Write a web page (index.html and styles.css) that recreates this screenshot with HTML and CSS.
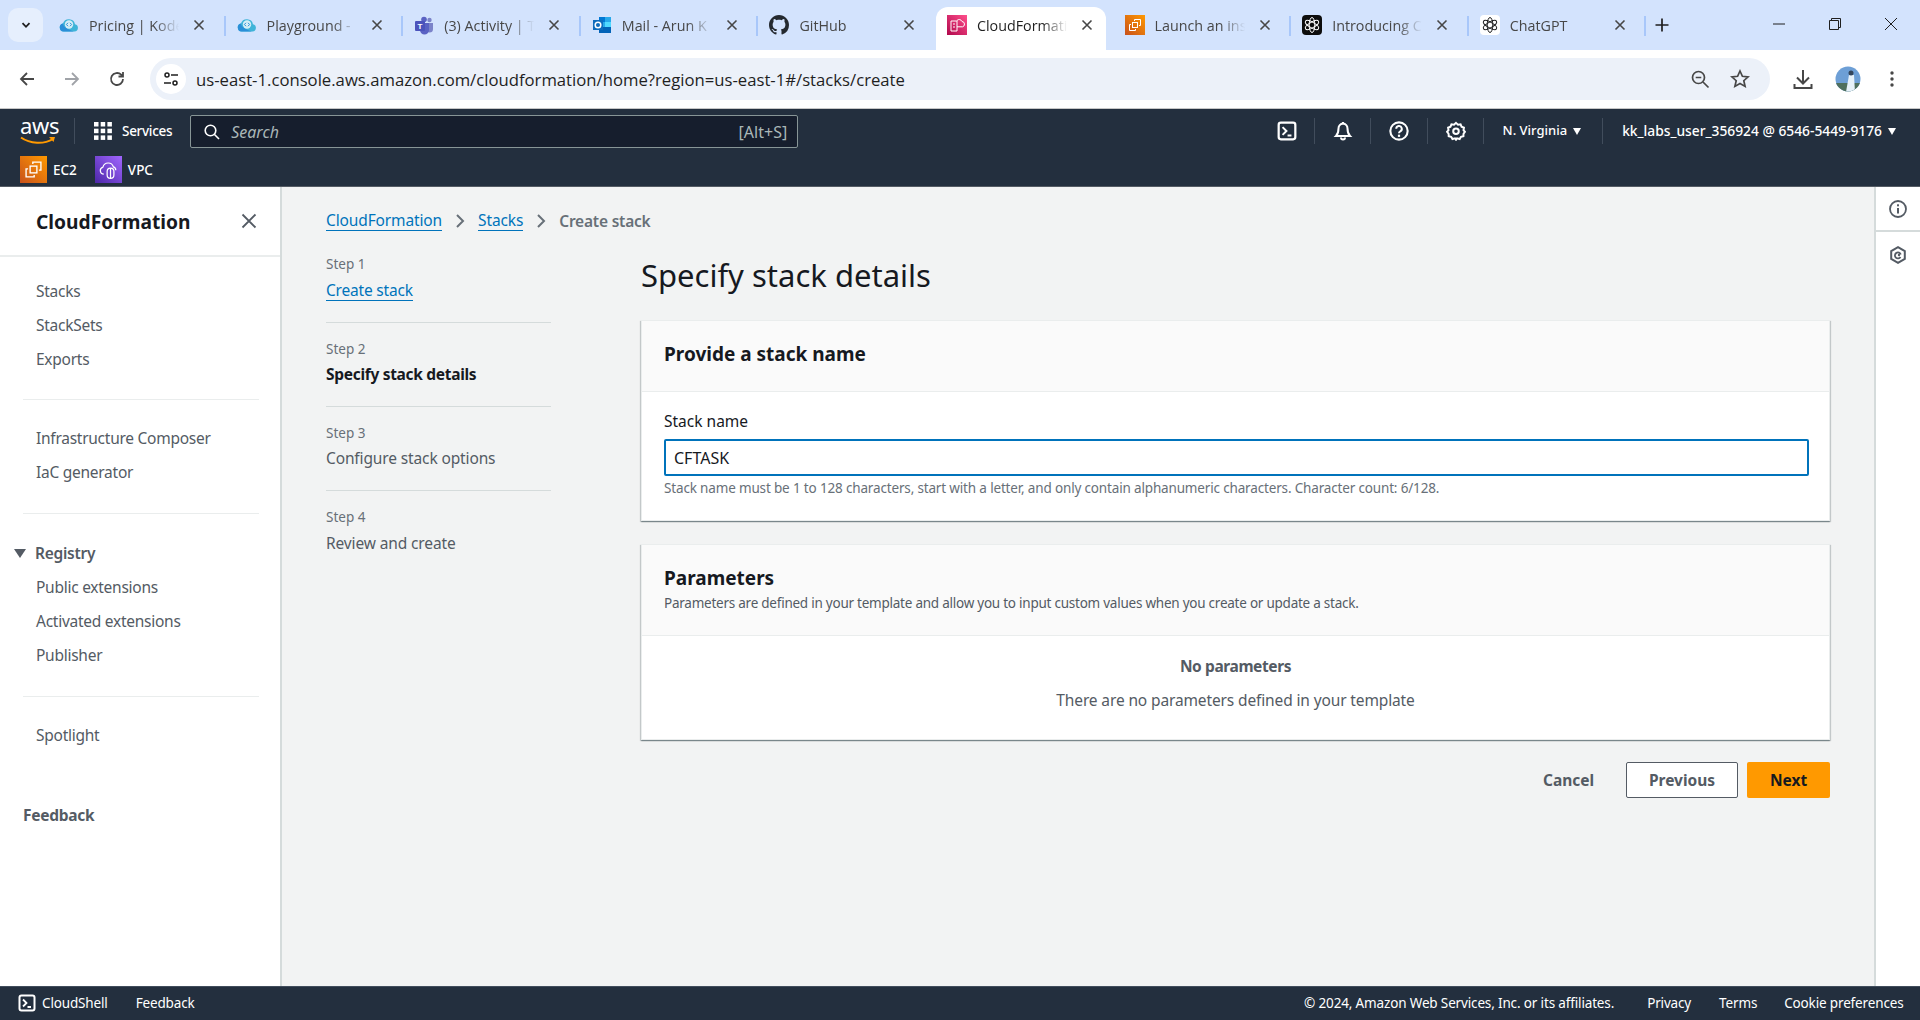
FILE: index.html
```html
<!DOCTYPE html>
<html lang="en">
<head>
<meta charset="utf-8">
<title>CloudFormation</title>
<link rel="stylesheet" href="styles.css">
</head>
<body>
<svg class="sprite" width="0" height="0" aria-hidden="true">
  <defs>
    <symbol id="x" viewBox="0 0 12 12"><path d="M1.5 1.5l9 9M10.5 1.5l-9 9" fill="none" stroke="currentColor" stroke-width="1.6"/></symbol>
    <symbol id="cloud" viewBox="0 0 20 20"><path d="M4.5 16.5a4 4 0 0 1-.6-7.9 6.3 6.3 0 0 1 12.1.6 3.7 3.7 0 0 1-.4 7.3z" fill="#3fb4d8"/><path d="M4.5 16.5a4 4 0 0 1-.6-7.9c.8 4 5 6 11 7.9z" fill="#2a8fd8"/><circle cx="10" cy="9.5" r="4.2" fill="#d6eef6"/><path d="M9 7.8L7.4 9.5 9 11.2M11 7.8l1.6 1.7L11 11.2" fill="none" stroke="#2a8fd8" stroke-width="1"/></symbol>
    <symbol id="openai" viewBox="0 0 20 20"><g fill="none" stroke="currentColor" stroke-width="1"><ellipse cx="10" cy="10" rx="2.8" ry="7.5"/><ellipse cx="10" cy="10" rx="2.8" ry="7.5" transform="rotate(60 10 10)"/><ellipse cx="10" cy="10" rx="2.8" ry="7.5" transform="rotate(120 10 10)"/></g></symbol>
    <symbol id="ec2" viewBox="0 0 20 20"><g fill="none" stroke="#fff" stroke-width="1"><rect x="7.5" y="7.5" width="5" height="5"/><path d="M9.5 6V4.5h6v6H14M6 9.5H4.5v6h6V14"/></g></symbol>
    <symbol id="term" viewBox="0 0 18 18"><rect x="1.5" y="1.5" width="15" height="15" rx="2" fill="none" stroke="currentColor" stroke-width="2"/><path d="M5 5.5L8.5 9 5 12.5M9.5 13H13" fill="none" stroke="currentColor" stroke-width="1.8"/></symbol>
  </defs>
</svg>

<header class="tabstrip">
  <button class="tab-list" type="button" aria-label="Search tabs"><svg width="12" height="12" viewBox="0 0 12 12"><path d="M2.5 4.2L6 7.8l3.5-3.6" fill="none" stroke="#1f1f1f" stroke-width="1.8"/></svg></button>
  <div class="tab"><svg class="fav"><use href="#cloud"/></svg><span class="tab-title">Pricing | Kode</span><svg class="tab-x"><use href="#x"/></svg></div>
  <div class="tab"><svg class="fav"><use href="#cloud"/></svg><span class="tab-title">Playground -</span><svg class="tab-x"><use href="#x"/></svg></div>
  <div class="tab"><svg class="fav" viewBox="0 0 20 20"><circle cx="15.5" cy="5" r="2.2" fill="#7b83c9"/><path d="M12 8h7v6a3.500 3.500 0 0 1-7 0z" fill="#7b83c9"/><circle cx="10" cy="4.500" r="2.800" fill="#5a62c3"/><path d="M6 8h9v7a4.500 4.500 0 0 1-9 0z" fill="#5a62c3"/><rect x="1" y="6" width="10" height="10" rx="1" fill="#4b53bc"/><text class="fav-letter" x="6" y="14">T</text></svg><span class="tab-title">(3) Activity | T</span><svg class="tab-x"><use href="#x"/></svg></div>
  <div class="tab"><svg class="fav" viewBox="0 0 20 20"><rect x="7" y="2" width="12" height="16" fill="#28a8ea"/><rect x="7" y="2" width="6" height="5" fill="#0078d4"/><rect x="13" y="7" width="6" height="5" fill="#50d9ff"/><path d="M7 12h12v6H7z" fill="#0364b8"/><rect x="1" y="5" width="10" height="10" fill="#0f6cbd"/><circle cx="6" cy="10" r="2.800" fill="none" stroke="#fff" stroke-width="1.500"/></svg><span class="tab-title">Mail - Arun K</span><svg class="tab-x"><use href="#x"/></svg></div>
  <div class="tab"><svg class="fav" viewBox="0 0 16 16"><path fill="#24292f" d="M8 0C3.580 0 0 3.580 0 8c0 3.540 2.290 6.530 5.470 7.590.4.070.55-.17.55-.38 0-.19-.01-.82-.01-1.490-2.010.37-2.530-.49-2.690-.94-.09-.23-.48-.94-.82-1.130-.28-.15-.68-.52-.01-.53.63-.01 1.080.58 1.230.82.720 1.210 1.870.87 2.330.66.070-.52.280-.87.510-1.070-1.780-.2-3.640-.89-3.640-3.950 0-.87.310-1.590.820-2.150-.08-.2-.36-1.020.08-2.120 0 0 .67-.21 2.200.82.640-.18 1.320-.27 2-.27s1.360.09 2 .27c1.530-1.040 2.200-.82 2.200-.82.440 1.100.160 1.920.080 2.120.51.560.82 1.270.82 2.150 0 3.070-1.870 3.750-3.650 3.950.29.250.54.730.54 1.480 0 1.070-.01 1.930-.01 2.200 0 .21.150.46.550.38A8.010 8.010 0 0 0 16 8c0-4.420-3.580-8-8-8z"/></svg><span class="tab-title">GitHub</span><svg class="tab-x"><use href="#x"/></svg></div>
  <div class="tab tab-active"><svg class="fav" viewBox="0 0 20 20"><defs><linearGradient id="pink" x1="0" y1="1" x2="1" y2="0"><stop offset="0" stop-color="#b0084d"/><stop offset="1" stop-color="#ff4f8b"/></linearGradient></defs><rect width="20" height="20" fill="url(#pink)"/><g fill="none" stroke="#fff" stroke-width="1"><path d="M4 6h6v10H4zM6 9h2M6 12h2"/><path d="M10 5.500a3 3 0 0 1 5 1 2.700 2.700 0 0 1 .5 5.300H10"/></g></svg><span class="tab-title">CloudFormati</span><svg class="tab-x"><use href="#x"/></svg></div>
  <div class="tab"><svg class="fav" viewBox="0 0 20 20"><defs><linearGradient id="orange" x1="0" y1="1" x2="1" y2="0"><stop offset="0" stop-color="#c8511b"/><stop offset="1" stop-color="#ff9900"/></linearGradient></defs><rect width="20" height="20" fill="url(#orange)"/><use href="#ec2"/></svg><span class="tab-title">Launch an ins</span><svg class="tab-x"><use href="#x"/></svg></div>
  <div class="tab"><svg class="fav fav-dark" viewBox="0 0 20 20"><rect width="20" height="20" rx="4" fill="#0d0d0d"/><use href="#openai"/></svg><span class="tab-title">Introducing C</span><svg class="tab-x"><use href="#x"/></svg></div>
  <div class="tab"><svg class="fav fav-light" viewBox="0 0 20 20"><rect width="20" height="20" rx="4" fill="#fff"/><use href="#openai"/></svg><span class="tab-title">ChatGPT</span><svg class="tab-x"><use href="#x"/></svg></div>
  <svg class="new-tab" width="16" height="16" viewBox="0 0 16 16"><path d="M8 1.500v13M1.500 8h13" stroke="#1f1f1f" stroke-width="1.700"/></svg>
  <div class="window-controls">
    <svg width="14" height="14" viewBox="0 0 14 14"><path d="M1 7h12" stroke="#1f1f1f" stroke-width="1"/></svg>
    <svg width="14" height="14" viewBox="0 0 14 14"><path d="M1.500 3.500h9v9h-9zM3.500 3.500v-2h9v9h-2" fill="none" stroke="#1f1f1f" stroke-width="1"/></svg>
    <svg width="14" height="14" viewBox="0 0 14 14"><path d="M1 1l12 12M13 1L1 13" stroke="#1f1f1f" stroke-width="1"/></svg>
  </div>
</header>

<div class="toolbar">
  <svg class="tb-icon" viewBox="0 0 18 18"><path d="M16 9H3M9 3L3 9l6 6" fill="none" stroke="#474747" stroke-width="1.800"/></svg>
  <svg class="tb-icon" viewBox="0 0 18 18"><path d="M2 9h13M9 3l6 6-6 6" fill="none" stroke="#a0a3a8" stroke-width="1.800"/></svg>
  <svg class="tb-icon" viewBox="0 0 18 18"><path d="M15 9a6 6 0 1 1-1.800-4.300L15 6.500M15 2v4.500h-4.500" fill="none" stroke="#474747" stroke-width="1.800"/></svg>
  <div class="omnibox">
    <span class="site-settings"><svg width="18" height="18" viewBox="0 0 18 18"><g fill="none" stroke="#1f1f1f" stroke-width="1.500"><circle cx="5" cy="5" r="2"/><path d="M9 5h7M2 13h7"/><circle cx="13" cy="13" r="2"/></g></svg></span>
    <span class="url">us-east-1.console.aws.amazon.com/cloudformation/home?region=us-east-1#/stacks/create</span>
    <svg class="omni-icon omni-zoom" viewBox="0 0 20 20"><g fill="none" stroke="#474747" stroke-width="1.700"><circle cx="8.500" cy="8.500" r="6"/><path d="M13 13l5.500 5.500M5.700 8.500h5.600"/></g></svg>
    <svg class="omni-icon" viewBox="0 0 20 20"><path d="M10 2l2.400 5.300 5.700.6-4.300 3.800 1.300 5.700L10 14.500l-5.100 2.900 1.300-5.700L1.900 7.900l5.700-.6z" fill="none" stroke="#474747" stroke-width="1.700"/></svg>
  </div>
  <svg class="tb-icon tb-download" viewBox="0 0 22 22"><path d="M11 2v13M5 9.500l6 6 6-6M2.500 16v4h17v-4" fill="none" stroke="#474747" stroke-width="2"/></svg>
  <svg class="avatar" viewBox="0 0 26 26"><defs><clipPath id="round"><circle cx="13" cy="13" r="12.500"/></clipPath></defs><g clip-path="url(#round)"><rect width="26" height="26" fill="#6d9fd6"/><rect y="17" width="26" height="9" fill="#4e6f5e"/><path d="M14 9h5l1 17h-9z" fill="#e6f1fa"/><circle cx="16" cy="7" r="2.500" fill="#33465c"/></g></svg>
  <svg class="tb-icon tb-menu" viewBox="0 0 18 18"><g fill="#474747"><circle cx="9" cy="3" r="1.700"/><circle cx="9" cy="9" r="1.700"/><circle cx="9" cy="15" r="1.700"/></g></svg>
</div>

<nav class="awsnav">
  <div class="nav-row">
    <div class="aws-logo"><span class="aws-word">aws</span><svg class="aws-smile" width="36" height="9" viewBox="0 0 36 9"><path d="M1 1.500c9 6.500 23 7 32 1.500" fill="none" stroke="#f90" stroke-width="2"/><path d="M29 1h6l-1.500 5z" fill="#f90"/></svg></div>
    <span class="nav-sep nav-sep-logo"></span>
    <svg class="grid-icon" width="18" height="18" viewBox="0 0 18 18"><g fill="#fff"><rect width="4.500" height="4.500"/><rect x="6.700" width="4.500" height="4.500"/><rect x="13.400" width="4.500" height="4.500"/><rect y="6.700" width="4.500" height="4.500"/><rect x="6.700" y="6.700" width="4.500" height="4.500"/><rect x="13.400" y="6.700" width="4.500" height="4.500"/><rect y="13.400" width="4.500" height="4.500"/><rect x="6.700" y="13.400" width="4.500" height="4.500"/><rect x="13.400" y="13.400" width="4.500" height="4.500"/></g></svg>
    <span class="nav-services">Services</span>
    <div class="search">
      <svg width="16" height="16" viewBox="0 0 16 16"><g fill="none" stroke="#fff" stroke-width="1.600"><circle cx="6.500" cy="6.500" r="5.300"/><path d="M10.500 10.500L15 15"/></g></svg>
      <span class="search-ph">Search</span>
      <span class="search-key">[Alt+S]</span>
    </div>
    <div class="nav-right">
      <svg class="nav-icon nav-term"><use href="#term"/></svg>
      <span class="nav-sep"></span>
      <svg class="nav-icon nav-icon-tight" viewBox="0 0 18 20"><path d="M9 2.500a5 5 0 0 0-4.500 5c0 3.500-.5 5.500-2.500 7.500h14c-2-2-2.500-4-2.500-7.500A5 5 0 0 0 9 2.500zM7 16.500a2 2 0 0 0 4 0M9 1v1.500" fill="none" stroke="#fff" stroke-width="2"/></svg>
      <span class="nav-sep"></span>
      <svg class="nav-icon" viewBox="0 0 18 18"><circle cx="9" cy="9" r="7.800" fill="none" stroke="#fff" stroke-width="1.900"/><path d="M6.500 7a2.500 2.500 0 1 1 3.600 2.300c-.8.400-1.100.9-1.100 1.700" fill="none" stroke="#fff" stroke-width="1.800"/><rect x="8" y="12.300" width="2" height="2" fill="#fff"/></svg>
      <span class="nav-sep"></span>
      <svg class="nav-icon nav-icon-tight" viewBox="0 0 18 18"><path d="M9 1l2 1.800 2.600-.4 1 2.500 2.400 1-.4 2.600L18 10l-1.400 2-.1 2.500-2.500.6-1.300 2.200L10 16.600 9 18l-1-1.400-2.600.7-1.300-2.200-2.500-.6-.1-2.500L0 10l1.400-1.500L1 5.900l2.400-1 1-2.500L7 2.800z" transform="translate(1 .8) scale(.89)" fill="none" stroke="#fff" stroke-width="2"/><circle cx="9" cy="9.300" r="2.500" fill="none" stroke="#fff" stroke-width="1.800"/></svg>
      <span class="nav-sep"></span>
      <span class="nav-menu nav-region">N. Virginia<i class="caret"></i></span>
      <span class="nav-sep"></span>
      <span class="nav-menu nav-user">kk_labs_user_356924 @ 6546-5449-9176<i class="caret"></i></span>
    </div>
  </div>
  <div class="nav-row nav-row-fav">
    <span class="svc"><svg class="svc-icon" viewBox="0 0 20 20"><rect width="20" height="20" fill="url(#orange)"/><use href="#ec2"/></svg>EC2</span>
    <span class="svc"><svg class="svc-icon" viewBox="0 0 20 20"><defs><linearGradient id="purple" x1="0" y1="1" x2="1" y2="0"><stop offset="0" stop-color="#4d27a8"/><stop offset="1" stop-color="#a166ff"/></linearGradient></defs><rect width="20" height="20" fill="url(#purple)"/><g fill="none" stroke="#fff" stroke-width=".9"><path d="M6.500 13.500a2.700 2.700 0 0 1-.6-5.300 4 4 0 0 1 7.700-.2 2.500 2.500 0 0 1 1.800 2.500"/><rect x="9" y="9" width="5" height="7.500" rx="2.500"/><path d="M11.500 9v7.500"/></g></svg>VPC</span>
  </div>
</nav>

<div class="workspace">
  <aside class="sidebar">
    <div class="side-head"><span class="side-title">CloudFormation</span><svg class="side-close" viewBox="0 0 16 16"><path d="M1.500 1.500l13 13M14.500 1.500l-13 13" stroke="#545b64" stroke-width="1.800"/></svg></div>
    <ul class="side-group side-first"><li>Stacks</li><li>StackSets</li><li>Exports</li></ul>
    <hr class="side-rule">
    <ul class="side-group"><li>Infrastructure Composer</li><li>IaC generator</li></ul>
    <hr class="side-rule">
    <div class="side-section"><i class="side-caret"></i>Registry</div>
    <ul class="side-group side-nested"><li>Public extensions</li><li>Activated extensions</li><li>Publisher</li></ul>
    <hr class="side-rule">
    <ul class="side-group"><li>Spotlight</li></ul>
    <div class="side-feedback">Feedback</div>
  </aside>

  <main class="main">
    <div class="breadcrumb">
      <a class="link">CloudFormation</a>
      <svg class="crumb-sep" viewBox="0 0 10 16"><path d="M2 2l6 6-6 6" fill="none" stroke="#687078" stroke-width="2"/></svg>
      <a class="link">Stacks</a>
      <svg class="crumb-sep" viewBox="0 0 10 16"><path d="M2 2l6 6-6 6" fill="none" stroke="#687078" stroke-width="2"/></svg>
      <span class="crumb-current">Create stack</span>
    </div>
    <div class="wizard">
      <ol class="steps">
        <li class="step"><div class="step-label">Step 1</div><a class="link step-name">Create stack</a></li>
        <li class="step"><div class="step-label">Step 2</div><div class="step-name step-active">Specify stack details</div></li>
        <li class="step"><div class="step-label">Step 3</div><div class="step-name">Configure stack options</div></li>
        <li class="step"><div class="step-label">Step 4</div><div class="step-name">Review and create</div></li>
      </ol>
      <section class="form">
        <h1 class="page-title">Specify stack details</h1>
        <div class="card">
          <div class="card-head card-head-name"><h2 class="card-title">Provide a stack name</h2></div>
          <div class="card-body">
            <label class="field-label" for="stackname">Stack name</label>
            <input class="field-input" id="stackname" value="CFTASK">
            <p class="field-hint">Stack name must be 1 to 128 characters, start with a letter, and only contain alphanumeric characters. Character count: 6/128.</p>
          </div>
        </div>
        <div class="card card-params">
          <div class="card-head card-head-params"><h2 class="card-title">Parameters</h2><p class="card-desc">Parameters are defined in your template and allow you to input custom values when you create or update a stack.</p></div>
          <div class="card-empty"><strong class="empty-title">No parameters</strong><span class="empty-text">There are no parameters defined in your template</span></div>
        </div>
        <div class="actions">
          <button class="btn btn-link" type="button">Cancel</button>
          <button class="btn btn-normal" type="button">Previous</button>
          <button class="btn btn-primary" type="button">Next</button>
        </div>
      </section>
    </div>
  </main>

  <aside class="tools">
    <div class="tool tool-info"><svg width="18" height="18" viewBox="0 0 18 18"><circle cx="9" cy="9" r="8" fill="none" stroke="#545b64" stroke-width="1.800"/><path d="M9 8v5.500" stroke="#545b64" stroke-width="2"/><rect x="8" y="4.300" width="2" height="2" fill="#545b64"/></svg></div>
    <div class="tool"><svg width="18" height="18" viewBox="0 0 18 18"><path d="M9 1.200l6.800 3.900v7.800L9 16.800l-6.800-3.900V5.100z" fill="none" stroke="#545b64" stroke-width="2"/><path d="M11.800 8.500A3 3 0 1 0 11.500 11" fill="none" stroke="#545b64" stroke-width="1.800"/><circle cx="10" cy="9" r="1.200" fill="#545b64"/></svg></div>
  </aside>
</div>

<footer class="footer">
  <span class="foot-item foot-shell"><svg class="foot-term"><use href="#term"/></svg>CloudShell</span>
  <span class="foot-item">Feedback</span>
  <span class="foot-copy">© 2024, Amazon Web Services, Inc. or its affiliates.</span>
  <span class="foot-item foot-privacy">Privacy</span>
  <span class="foot-item foot-terms">Terms</span>
  <span class="foot-item foot-cookie">Cookie preferences</span>
</footer>
</body>
</html>
```

FILE: styles.css
```css
* { box-sizing: border-box; }
html, body { margin: 0; height: 100%; }
body {
  width: 1920px; height: 1020px; overflow: hidden;
  display: flex; flex-direction: column;
  font-family: "Noto Sans", "Liberation Sans", sans-serif;
  font-size: 15.500px; color: #16191f; background: #fff;
}
.sprite { position: absolute; }
ul, ol { list-style: none; margin: 0; padding: 0; }
h1, h2, p { margin: 0; }

/* Browser tab strip */
.tabstrip { height: 50px; flex: none; display: flex; align-items: flex-end; background: #d3e3fd; padding-left: 8px; font-family: "Open Sans", "Liberation Sans", sans-serif; }
.tab-list { width: 35px; height: 34px; margin-bottom: 8px; margin-right: 5px; border: 0; border-radius: 10px; background: #e6effd; display: flex; align-items: center; justify-content: center; padding: 0; }
.tab { width: 177.6px; height: 43px; flex: none; display: flex; align-items: center; padding: 0 14px 7px 11px; position: relative; color: #474747; font-size: 14.300px; }
.tab::after { content: ""; position: absolute; right: 0; top: 9px; height: 20px; width: 2px; background: #a8c7fa; }
.tab:nth-of-type(5)::after, .tab:nth-of-type(6)::after { display: none; }
.tab-active { background: #fff; color: #1f1f1f; border-radius: 12px 12px 0 0; width: 170px; margin-right: 7.600px; }
.fav { width: 20px; height: 20px; flex: none; margin-right: 10px; }
.fav-dark { color: #fff; }
.fav-light { color: #1f1f1f; }
.fav-letter { font: 700 8px "Liberation Sans", sans-serif; fill: #fff; text-anchor: middle; }
.tab-title { flex: none; width: 96px; white-space: nowrap; overflow: hidden; -webkit-mask-image: linear-gradient(90deg, #000 68%, transparent 94%); mask-image: linear-gradient(90deg, #000 68%, transparent 94%); }
.tab-x { width: 12px; height: 12px; flex: none; margin-left: 8px; color: #474747; }
.new-tab { margin: 0 0 17px 8px; flex: none; }
.window-controls { margin-left: auto; align-self: flex-start; padding: 17px 22px 0 0; display: flex; gap: 42px; }

/* Browser toolbar */
.toolbar { height: 59px; flex: none; display: flex; align-items: center; background: #fff; border-bottom: 1px solid #c7c7c7; padding: 0 19px 1px 18px; }
.tb-icon { width: 18px; height: 18px; flex: none; margin-right: 27px; }
.omnibox { width: 1620px; height: 42px; margin-left: -3px; flex: none; border-radius: 21px; background: #ecf1f9; display: flex; align-items: center; padding: 0 20px 0 6px; }
.site-settings { width: 30px; height: 30px; border-radius: 50%; background: #fff; display: flex; align-items: center; justify-content: center; flex: none; }
.url { margin: 1px 0 0 10px; font: 16.700px "Open Sans", "Liberation Sans", sans-serif; color: #1f1f1f; white-space: nowrap; }
.omni-icon { width: 20px; height: 20px; flex: none; margin-left: 20px; }
.omni-zoom { margin-left: auto; }
.tb-download { width: 22px; height: 22px; margin: 0 0 0 22px; }
.avatar { width: 26px; height: 26px; flex: none; margin-left: 21px; }
.tb-menu { margin: 0 0 0 22px; }

/* AWS console navigation */
.awsnav { height: 78px; flex: none; background: #232f3e; color: #fff; border-bottom: 1px solid #545b64; }
.nav-row { height: 44px; display: flex; align-items: center; padding-left: 20px; font-size: 13.500px; }
.aws-logo { width: 36px; height: 28px; position: relative; flex: none; }
.aws-word { position: absolute; left: 0; top: -5px; font: 22px/26px "Noto Sans", sans-serif; letter-spacing: -.3px; }
.aws-smile { position: absolute; left: 0; top: 19px; }
.nav-sep { width: 1px; height: 26px; flex: none; background: #414d5c; }
.nav-sep-logo { margin-left: 18px; }
.grid-icon { margin-left: 19px; flex: none; }
.nav-services { margin-left: 10px; font-weight: 500; white-space: nowrap; letter-spacing: -.3px; }
.search { width: 608px; height: 33px; margin: 1px 0 0 18px; flex: none; background: #161e2d; border: 1px solid #879596; border-radius: 2px; display: flex; align-items: center; padding: 0 10px 0 13px; }
.search-ph { margin-left: 11px; font-style: italic; color: #aab7b8; font-size: 16px; }
.search-key { margin-left: auto; color: #aab7b8; font-size: 16px; }
.nav-right { margin-left: auto; padding-right: 24px; display: flex; align-items: center; }
.nav-icon { width: 20px; height: 20px; flex: none; margin: 0 18px; color: #fff; }
.nav-icon-tight { margin-right: 17px; }
.nav-term { margin: 0 17px 0 0; }
.nav-menu { font-size: 13.800px; font-weight: 500; white-space: nowrap; display: flex; align-items: center; margin-bottom: 2px; }
.nav-region { margin-left: 19px; margin-right: 21px; font-size: 13px; }
.nav-user { margin-left: 19px; }
.caret { width: 0; height: 0; margin-left: 6px; border: 4.500px solid transparent; border-top: 7px solid #fff; border-bottom: 0; margin-top: 3px; }
.nav-row-fav { height: 33px; gap: 18px; }
.svc { display: flex; align-items: center; font-weight: 500; font-size: 13.500px; }
.svc-icon { width: 27px; height: 27px; margin-right: 6px; flex: none; }

/* Layout below the chrome */
.workspace { flex: 1; min-height: 0; display: flex; }

/* Left navigation */
.sidebar { width: 282px; flex: none; border-right: 2px solid #d5dbdb; background: #fff; color: #545b64; letter-spacing: -.26px; }
.side-head { height: 70px; padding: 0 23px 0 36px; border-bottom: 2px solid #eaeded; display: flex; align-items: center; justify-content: space-between; }
.side-title { font-size: 19.200px; font-weight: 700; color: #16191f; letter-spacing: 0; }
.side-close { width: 16px; height: 16px; }
.side-group { padding-left: 36px; }
.side-group li { height: 33.800px; line-height: 33.800px; white-space: nowrap; }
.side-first { padding-top: 18px; }
.side-rule { margin: 23px 21px 22px 23px; height: 1px; border: 0; background: #eaeded; }
.side-section { height: 35.500px; line-height: 34px; padding-left: 35px; font-weight: 600; position: relative; }
.side-caret { position: absolute; left: 14px; top: 13px; width: 0; height: 0; border: 6px solid transparent; border-top: 9px solid #545b64; border-bottom: 0; }
.side-feedback { margin: 45px 0 0 23px; font-weight: 700; line-height: 34px; }

/* Main content */
.main { flex: 1; min-width: 0; background: #f2f3f3; padding: 0 44px; }
.breadcrumb { height: 52px; padding-top: 15px; display: flex; align-items: center; line-height: 24px; letter-spacing: -.13px; }
.link { color: #0073bb; text-decoration: none; border-bottom: 1.500px solid #0073bb; line-height: 20px; display: inline-block; }
.crumb-sep { width: 10px; height: 16px; margin: 0 13px; flex: none; }
.crumb-current { color: #687078; font-weight: 600; letter-spacing: -.2px; }
.wizard { display: flex; }
.steps { width: 225px; flex: none; margin-right: 90px; }
.step { height: 84px; padding-top: 14px; border-bottom: 1.500px solid #d5dbdb; }
.step:first-child { padding-top: 13px; }
.step:last-child { border-bottom: 0; }
.step-label { font-size: 13.500px; line-height: 24px; color: #687078; }
.step-name { color: #545b64; line-height: 28px; white-space: nowrap; letter-spacing: -.13px; margin-top: -1px; }
.step:last-child .step-name { margin-top: 0; }
.link.step-name { color: #0073bb; line-height: 20px; margin-top: 4px; letter-spacing: -.2px; }
.step-active { color: #16191f; font-weight: 700; letter-spacing: -.3px; }
.form { flex: 1; min-width: 0; }
.page-title { margin: 12px 0 21px; font-size: 31px; font-weight: 400; line-height: 48px; color: #16191f; }
.card { background: #fff; border: 1px solid #eaeded; box-shadow: 0 1px 1px 0 rgba(0, 28, 36, .3), 1px 1px 1px 0 rgba(0, 28, 36, .15), -1px 1px 1px 0 rgba(0, 28, 36, .15); }
.card-head { background: #fafafa; border-bottom: 1px solid #eaeded; padding: 0 22px; }
.card-head-name { height: 71px; display: flex; align-items: center; padding-bottom: 3px; }
.card-head-params { height: 91px; padding-top: 20px; }
.card-title { font-size: 19px; font-weight: 700; line-height: 27px; color: #16191f; }
.card-desc { font-size: 13.500px; line-height: 20px; color: #545b64; margin-top: 1px; letter-spacing: -.24px; white-space: nowrap; }
.card-body { padding: 17px 20px 22px 22px; }
.field-label { display: block; line-height: 24px; color: #16191f; }
.field-input { display: block; width: 100%; height: 37px; margin-top: 6px; padding: 0 8px; border: 2px solid #0073bb; border-radius: 2px; font: 16px "Noto Sans", sans-serif; color: #16191f; background: #fff; outline: 0; }
.field-hint { margin-top: 2px; font-size: 13.500px; line-height: 20px; color: #687078; white-space: nowrap; letter-spacing: -.16px; }
.card-params { margin-top: 23px; }
.card-empty { height: 103px; padding-top: 13px; display: flex; flex-direction: column; align-items: center; }
.empty-title { color: #545b64; font-weight: 700; line-height: 34px; letter-spacing: -.4px; }
.empty-text { color: #545b64; line-height: 34px; letter-spacing: -.13px; }
.actions { margin-top: 22px; display: flex; justify-content: flex-end; align-items: center; }
.btn { height: 36px; font: 700 15.500px "Noto Sans", sans-serif; border-radius: 2px; padding: 0; }
.btn-link { border: 0; background: none; color: #545b64; width: 50px; margin-right: 33px; }
.btn-normal { width: 112px; border: 1px solid #545b64; background: #fff; color: #545b64; margin-right: 9px; }
.btn-primary { width: 83px; border: 0; background: #ff9900; color: #16191f; }

/* Tools rail */
.tools { width: 46px; flex: none; background: #fff; border-left: 2px solid #d5dbdb; }
.tool { height: 45px; display: flex; align-items: center; justify-content: center; }
.tool-info { border-bottom: 2px solid #d5dbdb; }

/* Console footer */
.footer { height: 34px; flex: none; background: #232f3e; color: #fff; display: flex; align-items: center; padding: 0 16.500px 2px 18px; font-size: 13.500px; letter-spacing: -.15px; border-top: 1px solid #414d5c; }
.foot-item { white-space: nowrap; display: flex; align-items: center; }
.foot-shell { margin-right: 28px; }
.foot-term { width: 18px; height: 18px; margin-right: 6px; color: #fff; }
.foot-copy { margin-left: auto; margin-right: 33px; white-space: nowrap; }
.foot-privacy { margin-right: 28px; }
.foot-terms { margin-right: 27px; }
```
